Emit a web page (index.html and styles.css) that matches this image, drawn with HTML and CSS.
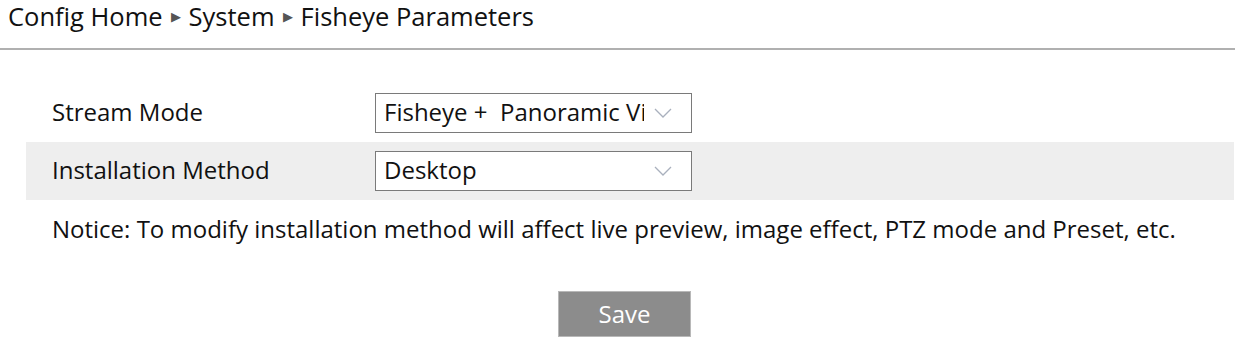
FILE: index.html
```html
<!DOCTYPE html>
<html lang="en">
<head>
    <meta charset="UTF-8">
    <meta name="viewport" content="width=device-width, initial-scale=1.0">
    <title>Fisheye Parameters</title>
    <link rel="stylesheet" href="styles.css">
</head>
<body>

    <!-- Breadcrumb -->
    <div class="crumbs">
        <span>Config Home</span>
        <span class="arrow">&#9654;</span>
        <span>System</span>
        <span class="arrow">&#9654;</span>
        <span>Fisheye Parameters</span>
    </div>

    <div class="content">

        <div class="form-row">
            <div class="label">Stream Mode</div>
            <div class="select-box">
                <span class="value">Fisheye +  Panoramic View</span>
                <svg class="chevron" width="18" height="10" viewBox="0 0 18 10"><polyline points="1,1 9,9 17,1" fill="none" stroke="#a9b0bd" stroke-width="1.3"/></svg>
            </div>
        </div>

        <div class="form-row shaded">
            <div class="label">Installation Method</div>
            <div class="select-box">
                <span class="value">Desktop</span>
                <svg class="chevron" width="18" height="10" viewBox="0 0 18 10"><polyline points="1,1 9,9 17,1" fill="none" stroke="#a9b0bd" stroke-width="1.3"/></svg>
            </div>
        </div>

        <p class="notice">Notice: To modify installation method will affect live preview, image effect, PTZ mode and Preset, etc.</p>

        <div class="actions">
            <button class="save-btn">Save</button>
        </div>

    </div>

</body>
</html>
```

FILE: styles.css
```css
body {
    font-family: "Open Sans", "Noto Sans", sans-serif;
    font-size: 24px;
    color: #111;
    background-color: white;
    margin: 0;
    padding: 0;
}

.crumbs {
    height: 50px;
    padding: 0 0 15px 8px;
    box-sizing: border-box;
    border-bottom: 2px solid #b0b0b0;
    display: flex;
    align-items: center;
    gap: 8px;
    font-size: 25.5px;
    line-height: 1;
}

.crumbs .arrow {
    font-size: 13px;
    color: #555;
}

.content {
    padding: 34px 1px 0 26px;
}

.form-row {
    display: flex;
    align-items: center;
    height: 58px;
}

.form-row.shaded {
    background-color: #eeeeee;
}

.label {
    width: 349px;
    padding: 0 0 3px 26px;
    box-sizing: border-box;
}

.select-box {
    width: 317px;
    height: 40px;
    border: 1px solid #7a7a7a;
    box-sizing: border-box;
    background-color: white;
    display: flex;
    align-items: center;
    padding: 0 19px 3px 8px;
}

.select-box .value {
    flex: 1;
    overflow: hidden;
    white-space: pre;
}

.chevron {
    margin: 3px 0 0 10px;
}

.notice {
    margin: 0;
    padding-left: 26px;
    height: 60px;
    line-height: 58px;
}

.actions {
    padding-top: 31px;
    padding-left: 532px;
}

.save-btn {
    width: 133px;
    height: 46px;
    background-color: #8c8c8c;
    border: 1px solid #b8b8b8;
    color: white;
    font-family: inherit;
    font-size: 24px;
    padding: 0 0 2px;
    cursor: pointer;
}
```
